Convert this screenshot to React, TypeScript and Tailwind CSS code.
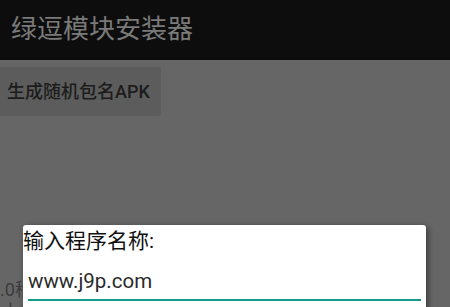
export default function App() {
  return (
    <div className="relative h-[307px] w-[450px] overflow-hidden bg-[#666666] font-['Roboto','Noto_Sans_CJK_SC',sans-serif]">
      <header className="flex h-[60px] items-center bg-[#0d0d0d] pl-[11px] pb-[2px]">
        <h1 className="text-[26px] leading-none text-[#7a7a7a]">绿逗模块安装器</h1>
      </header>

      <div className="flex flex-col pt-[7px]">
        <button className="flex h-[49px] w-[165px] -ml-[4px] items-center rounded-[3px] bg-[#5c5c5c] pl-[11px] text-[18px] font-medium text-[#1c1c1c]">
          生成随机包名APK
        </button>

        <div className="mt-[163px] -ml-[10px] text-[18px] leading-[22px] text-[#3c3c3c] whitespace-nowrap">
          <p>4.0稍后安装完成</p>
          <p className="pl-[12px]">上传后的应用程序将会使用生成的包名</p>
        </div>
      </div>

      {/* dialog */}
      <div className="absolute left-[23px] top-[225px] w-[403px] h-[100px] rounded-t-[3px] bg-white shadow-[2px_2px_6px_rgba(0,0,0,0.45)]">
        <p className="pt-[3px] text-[21px] leading-[26px] text-[#111111]">输入程序名称:</p>
        <div className="mx-[5px] mt-[14px] border-b-[2px] border-[#16978a] pb-[5px]">
          <span className="block text-[20.5px] leading-[26px] text-[#2a2a2a]">www.j9p.com</span>
        </div>
      </div>
    </div>
  );
}
